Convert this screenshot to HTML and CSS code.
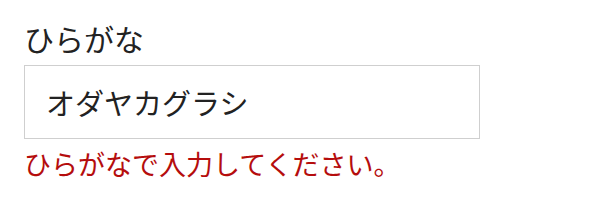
FILE: index.html
```html
<!DOCTYPE html>
<html lang="ja">
<head>
<meta charset="utf-8">
<link rel="stylesheet" href="styles.css">
</head>
<body>
<div class="field">
  <label class="label" for="kana">ひらがな</label>
  <input class="input" id="kana" type="text" value="オダヤカグラシ">
  <p class="error">ひらがなで入力してください。</p>
</div>
</body>
</html>
```

FILE: styles.css
```css
html, body {
  margin: 0;
  padding: 0;
  background: #fff;
}
body {
  font-family: "Noto Sans CJK JP", "Noto Sans", sans-serif;
  color: #222;
}
.field {
  display: flex;
  flex-direction: column;
  align-items: flex-start;
  padding: 18px 24px 0;
}
.label {
  font-size: 30px;
  line-height: 40px;
  color: #222;
}
.input {
  box-sizing: border-box;
  margin-top: 7px;
  width: 456px;
  height: 74px;
  border: 1px solid #cfcfcf;
  border-radius: 0;
  padding: 0 21px;
  font-family: inherit;
  font-size: 29px;
  color: #222;
  background: #fff;
  outline: none;
}
.error {
  margin: 7px 0 0;
  font-size: 27px;
  line-height: 36px;
  color: #b50d0d;
}
```
